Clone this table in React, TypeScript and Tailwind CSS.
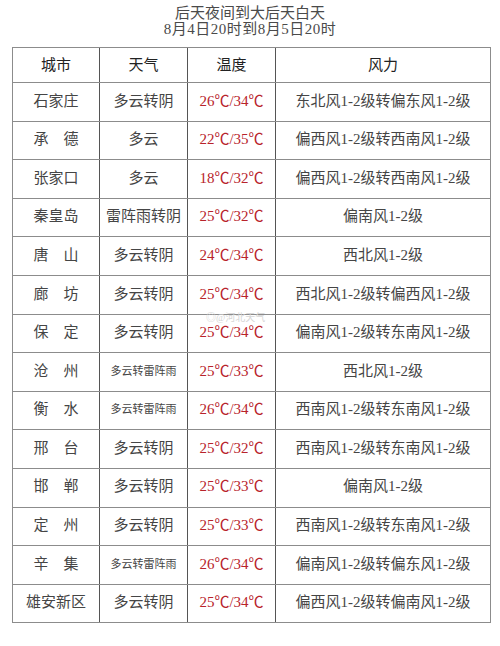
const rows: [string, string, string, string][] = [
  ["石家庄", "多云转阴", "26℃/34℃", "东北风1-2级转偏东风1-2级"],
  ["承　德", "多云", "22℃/35℃", "偏西风1-2级转西南风1-2级"],
  ["张家口", "多云", "18℃/32℃", "偏西风1-2级转西南风1-2级"],
  ["秦皇岛", "雷阵雨转阴", "25℃/32℃", "偏南风1-2级"],
  ["唐　山", "多云转阴", "24℃/34℃", "西北风1-2级"],
  ["廊　坊", "多云转阴", "25℃/34℃", "西北风1-2级转偏西风1-2级"],
  ["保　定", "多云转阴", "25℃/34℃", "偏南风1-2级转东南风1-2级"],
  ["沧　州", "多云转雷阵雨", "25℃/33℃", "西北风1-2级"],
  ["衡　水", "多云转雷阵雨", "26℃/34℃", "西南风1-2级转东南风1-2级"],
  ["邢　台", "多云转阴", "25℃/32℃", "西南风1-2级转东南风1-2级"],
  ["邯　郸", "多云转阴", "25℃/33℃", "偏南风1-2级"],
  ["定　州", "多云转阴", "25℃/33℃", "西南风1-2级转东南风1-2级"],
  ["辛　集", "多云转雷阵雨", "26℃/34℃", "偏南风1-2级转偏东风1-2级"],
  ["雄安新区", "多云转阴", "25℃/34℃", "偏西风1-2级转偏南风1-2级"],
];

const font = { fontFamily: '"Liberation Serif", "Noto Sans CJK SC", serif' };

export default function App() {
  return (
    <div className="relative h-[646px] w-[500px] bg-white text-[#454545]" style={font}>
      {/* title */}
      <div className="flex flex-col items-center pt-[5px] text-[15px] leading-[16px] text-[#4a4a4a]">
        <p>后天夜间到大后天白天</p>
        <p className="tracking-[0.5px]">8月4日20时到8月5日20时</p>
      </div>

      <div className="ml-[12px] mt-[10px] w-[479px] border border-[#8c8c8c]">
        <div className="grid h-[34px] grid-cols-[87px_88px_88px_1fr] items-center text-center text-[15px] text-[#222]">
          <div className="flex h-full items-center justify-center border-r border-[#555]">城市</div>
          <div className="flex h-full items-center justify-center border-r border-[#555]">天气</div>
          <div className="flex h-full items-center justify-center border-r border-[#555]">温度</div>
          <div className="flex h-full items-center justify-center">风力</div>
        </div>
        {rows.map(([city, weather, temp, wind]) => (
          <div
            key={city}
            className="grid h-[38.6px] grid-cols-[87px_88px_88px_1fr] border-t border-[#8c8c8c] text-center text-[15px]"
          >
            <div className="flex items-center justify-center border-r border-[#555] pb-[2px]">{city}</div>
            <div
              className={
                "flex items-center justify-center border-r border-[#555] pb-[2px] " +
                (weather.length > 5 ? "text-[11px]" : "text-[15px]")
              }
            >
              {weather}
            </div>
            <div className="flex items-center justify-center border-r border-[#555] pb-[2px] text-[#b8232b]">
              {temp}
            </div>
            <div className="flex items-center justify-center pb-[2px]">{wind}</div>
          </div>
        ))}
      </div>

      {/* watermark */}
      <div className="absolute left-[206px] top-[313px] text-[10px] leading-none text-[#d6d6d6]">
        ◎@河北天气
      </div>
    </div>
  );
}
